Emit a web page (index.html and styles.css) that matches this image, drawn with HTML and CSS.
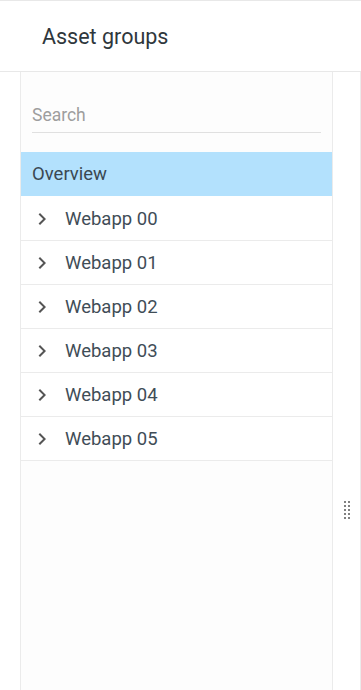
FILE: index.html
```html
<!DOCTYPE html>
<html>

<head>
    <meta charset="utf-8">
    <title>Asset groups</title>
    <link rel="stylesheet" href="styles.css">
</head>

<body>
<div class="header">
    <span class="title">Asset groups</span>
</div>

<div class="main">
    <div class="panel">
        <div class="search-box">
            <input type="text" class="search" placeholder="Search">
        </div>
        <div class="item overview">Overview</div>
        <div class="item">
            <svg class="chevron" viewBox="0 0 24 24"><path d="M10 6L8.59 7.41 13.17 12l-4.58 4.59L10 18l6-6z"/></svg>
            <span>Webapp 00</span>
        </div>
        <div class="item">
            <svg class="chevron" viewBox="0 0 24 24"><path d="M10 6L8.59 7.41 13.17 12l-4.58 4.59L10 18l6-6z"/></svg>
            <span>Webapp 01</span>
        </div>
        <div class="item">
            <svg class="chevron" viewBox="0 0 24 24"><path d="M10 6L8.59 7.41 13.17 12l-4.58 4.59L10 18l6-6z"/></svg>
            <span>Webapp 02</span>
        </div>
        <div class="item">
            <svg class="chevron" viewBox="0 0 24 24"><path d="M10 6L8.59 7.41 13.17 12l-4.58 4.59L10 18l6-6z"/></svg>
            <span>Webapp 03</span>
        </div>
        <div class="item">
            <svg class="chevron" viewBox="0 0 24 24"><path d="M10 6L8.59 7.41 13.17 12l-4.58 4.59L10 18l6-6z"/></svg>
            <span>Webapp 04</span>
        </div>
        <div class="item">
            <svg class="chevron" viewBox="0 0 24 24"><path d="M10 6L8.59 7.41 13.17 12l-4.58 4.59L10 18l6-6z"/></svg>
            <span>Webapp 05</span>
        </div>
    </div>
    <div class="splitter">
        <div class="grip">
            <i></i><i></i><i></i><i></i><i></i>
            <i></i><i></i><i></i><i></i><i></i>
        </div>
    </div>
</div>
</body>

</html>
```

FILE: styles.css
```css
html, body {
    margin: 0;
    padding: 0;
    background-color: #fff;
}

body {
    font-family: Roboto, "Liberation Sans", sans-serif;
    width: 361px;
    height: 690px;
    overflow: hidden;
}

.header {
    height: 70px;
    border-top: 1px solid #e8e8e8;
    border-bottom: 1px solid #e8e8e8;
    padding-left: 42px;
    display: flex;
    align-items: center;
}

.title {
    font-size: 21.5px;
    color: #2f373c;
}

.main {
    display: flex;
    flex-direction: row;
    height: 618px;
    padding-left: 20px;
}

.panel {
    width: 311px;
    border-left: 1px solid #ebebeb;
    border-right: 1px solid #ebebeb;
    background-color: #fdfdfd;
}

.search-box {
    padding: 29px 11px 19px 11px;
}

.search {
    display: block;
    width: 100%;
    box-sizing: border-box;
    height: 32px;
    border: none;
    border-bottom: 1px solid #e0e0e0;
    background: transparent;
    padding: 0 0 3px 0;
    font-family: Roboto, "Liberation Sans", sans-serif;
    font-size: 17.5px;
    color: #333;
    outline: none;
}

.search::placeholder {
    color: #9e9e9e;
}

.item {
    display: flex;
    align-items: center;
    height: 43px;
    border-bottom: 1px solid #ebebeb;
    background-color: #fff;
    font-size: 18.5px;
    color: #3f4d57;
    padding-left: 9px;
}

.item.overview {
    height: 44px;
    border-bottom: 1px solid #fff;
    background-color: #b3e1fd;
    padding-left: 11px;
    font-size: 18.5px;
    color: #3a4852;
}

.chevron {
    width: 24px;
    height: 24px;
    fill: #555;
    margin-right: 11px;
}

.splitter {
    flex: 1;
    border-right: 1px solid #ebebeb;
    display: flex;
    align-items: center;
    justify-content: center;
}

.grip {
    display: grid;
    grid-template-columns: 2px 2px;
    grid-auto-flow: column;
    grid-template-rows: repeat(5, 2px);
    column-gap: 2px;
    row-gap: 2px;
    margin-top: 258px;
}

.grip i {
    width: 2px;
    height: 2px;
    background-color: #808080;
}
```
